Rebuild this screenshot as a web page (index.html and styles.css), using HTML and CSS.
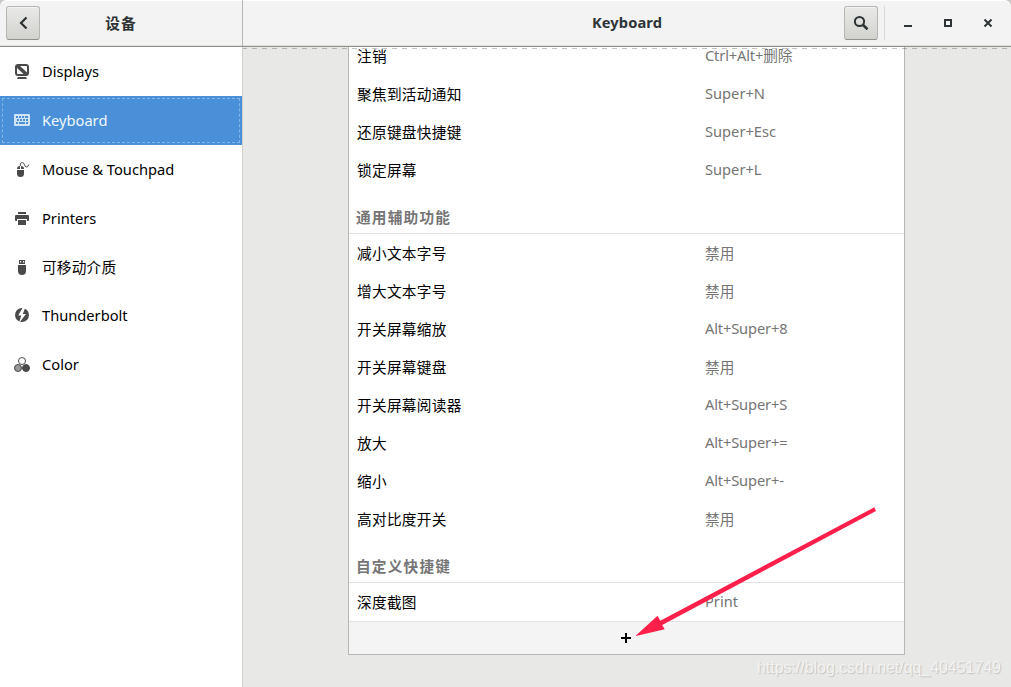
FILE: index.html
```
<!DOCTYPE html>
<html lang="zh-CN">
<head>
<meta charset="utf-8">
<title>Keyboard</title>
<link rel="stylesheet" href="styles.css">
</head>
<body>
<div class="window">
  <header class="titlebar">
    <div class="title-left">
      <button class="btn" aria-label="Back"><svg width="16" height="16" viewBox="0 0 16 16"><path d="M11.500 2.500 6 8l5.500 5.500" fill="none" stroke="#2e3436" stroke-width="2.200"/></svg></button>
      <h1 class="title title-cn">设备</h1>
    </div>
    <div class="title-right">
      <h1 class="title title-main">Keyboard</h1>
      <button class="btn" aria-label="Search"><svg width="16" height="16" viewBox="0 0 16 16" fill="none" stroke="#2e3436"><circle cx="6.500" cy="6.500" r="4.600" stroke-width="2"/><path d="M9.800 9.800 14.500 14.300" stroke-width="2.600"/></svg></button>
      <div class="controls">
        <svg width="16" height="16" viewBox="0 0 16 16"><path d="M4 10h8v2H4z" fill="#2e3436"/></svg>
        <svg width="16" height="16" viewBox="0 0 16 16"><path d="M5 5h6v6H5z" fill="none" stroke="#2e3436" stroke-width="2"/></svg>
        <svg width="16" height="16" viewBox="0 0 16 16"><path d="m4.500 4.500 7 7m0-7-7 7" fill="none" stroke="#2e3436" stroke-width="2"/></svg>
      </div>
    </div>
  </header>
  <div class="body">
    <nav class="sidebar">
      <div class="item"><svg class="icon" viewBox="0 0 16 16"><path d="M4 0h8a3 3 0 0 1 3 3v6a3 3 0 0 1-3 3H4a3 3 0 0 1-3-3V3a3 3 0 0 1 3-3zM6 2l7 6.500V3q0-1-1-1zM3 4v5q0 1 1 1h5.500z" fill-rule="evenodd"/><path d="M4 13h8l1 2H3z"/></svg><span>Displays</span></div>
      <div class="item selected"><svg class="icon" viewBox="0 0 16 16"><path fill-rule="evenodd" d="M1 2h14q1 0 1 1v10q0 1-1 1H1q-1 0-1-1V3q0-1 1-1zm1 2v2h2V4zm3 0v2h2V4zm3 0v2h2V4zm3 0v2h3V4zM3 7v2h2V7zm3 0v2h2V7zm3 0v2h2V7zm3 0v2h2V7zM2 10v2h2v-2zm3 0v2h6v-2zm7 0v2h2v-2z"/></svg><span>Keyboard</span></div>
      <div class="item"><svg class="icon" viewBox="0 0 16 16"><path d="M3 8h7v3.500a3.500 3.500 0 0 1-7 0zM3 7q0-3 3-3v3zM7 4q3 0 3 3H7z"/><path d="M6.300 4C6.300 1 7 .5 8.200.5 11 .5 10 5 12.500 5q1.500 0 2.500-2.500" fill="none" stroke="#4a4a4a"/></svg><span>Mouse &amp; Touchpad</span></div>
      <div class="item"><svg class="icon" viewBox="0 0 16 16"><path d="M4 1h8v2H4zM2 4h12q1 0 1 1v4q0 1-1 1h-1V8H3v2H2q-1 0-1-1V5q0-1 1-1zM4 9h8v5H4z"/></svg><span>Printers</span></div>
      <div class="item short"><svg class="icon" viewBox="0 0 16 16"><path fill-rule="evenodd" d="M5 0h6v4H5zm1 1v1.500h1.200V1zm3 0v1.500h1.200V1zM4 5h8v6a4 4 0 0 1-8 0z"/></svg><span class="cn">可移动介质</span></div>
      <div class="item bolt"><svg class="icon" viewBox="0 0 16 16"><circle cx="8" cy="8" r="7"/><path d="M9 0 4.200 8.500h3L5 16l7-9H8.800L11.500 0z" fill="#fff"/></svg><span>Thunderbolt</span></div>
      <div class="item"><svg class="icon" viewBox="0 0 16 16" stroke="#4a4a4a"><circle cx="8" cy="4" r="3.500" fill="#fff"/><circle cx="4" cy="11" r="3.500" fill="#999"/><circle cx="12" cy="11" r="3.500"/></svg><span>Color</span></div>
    </nav>
    <main class="content">
      <div class="panel">
        <div class="row first"><span class="name">注销</span><span class="key">Ctrl+Alt+删除</span></div>
        <div class="row"><span class="name">聚焦到活动通知</span><span class="key">Super+N</span></div>
        <div class="row"><span class="name">还原键盘快捷键</span><span class="key">Super+Esc</span></div>
        <div class="row"><span class="name">锁定屏幕</span><span class="key">Super+L</span></div>
        <h2 class="section">通用辅助功能</h2>
        <div class="row"><span class="name">减小文本字号</span><span class="key">禁用</span></div>
        <div class="row"><span class="name">增大文本字号</span><span class="key">禁用</span></div>
        <div class="row"><span class="name">开关屏幕缩放</span><span class="key combo">Alt+Super+8</span></div>
        <div class="row"><span class="name">开关屏幕键盘</span><span class="key">禁用</span></div>
        <div class="row"><span class="name">开关屏幕阅读器</span><span class="key combo">Alt+Super+S</span></div>
        <div class="row"><span class="name">放大</span><span class="key combo">Alt+Super+=</span></div>
        <div class="row"><span class="name">缩小</span><span class="key combo">Alt+Super+-</span></div>
        <div class="row"><span class="name">高对比度开关</span><span class="key">禁用</span></div>
        <h2 class="section">自定义快捷键</h2>
        <div class="row"><span class="name">深度截图</span><span class="key">Print</span></div>
        <div class="add"><svg width="10" height="10" viewBox="0 0 10 10"><path d="M4 0h2v4h4v2H6v4H4V6H0V4h4z"/></svg></div>
      </div>
    </main>
  </div>
  <svg class="arrow" width="240" height="130" viewBox="636 507 240 130"><path d="M874.300 507.300 876 511 662.200 625 664.700 629.300 635.500 636 657.500 615.700 660.300 620.700z" fill="#ff1f4b"/></svg>
  <div class="watermark">https://blog.csdn.net/qq_40451749</div>
</div>
</body>
</html>
```
FILE: styles.css
```
* { box-sizing: border-box; }
body {
  margin: 0;
  font-family: "Noto Sans", "Noto Sans CJK SC", sans-serif;
  font-size: 14.670px;
  color: #000;
}
.window {
  position: relative;
  width: 1011px;
  height: 687px;
  overflow: hidden;
  display: flex;
  flex-direction: column;
  background: #c9c9c7;
}
.titlebar {
  flex: none;
  height: 47px;
  display: flex;
  background: #f3f3f3;
  border-bottom: 1px solid #8f908b;
  box-shadow: inset 0 1px #fff, inset 0 -1px #dfdfdc;
  border-radius: 7px 7px 0 0;
}
.title-left {
  width: 243px;
  display: flex;
  align-items: center;
  padding-left: 6px;
  border-right: 1px solid #b6b6b3;
}
.title-right {
  flex: 1;
  display: flex;
  align-items: center;
}
.title {
  margin: 0;
  flex: 1;
  text-align: center;
  font-size: 14.670px;
  line-height: 20px;
  font-weight: 700;
  color: #2e3436;
}
.title-cn { padding-right: 40px; letter-spacing: 1px; }
.title-main { padding: 0 0 2px 167px; letter-spacing: .1px; }
.btn {
  flex: none;
  width: 34px;
  height: 34px;
  padding: 0;
  display: flex;
  align-items: center;
  justify-content: center;
  border: 1px solid #b6b6b3;
  border-bottom-color: #91918c;
  border-radius: 3px;
  background: linear-gradient(#e9e9e7, #d2d2cf);
  box-shadow: inset 0 1px #f4f4f3;
}
.controls {
  flex: none;
  width: 127px;
  height: 34px;
  margin-left: 6px;
  padding-left: 15px;
  display: flex;
  align-items: center;
  gap: 24px;
  border-left: 1px solid #d9d9d7;
}
.body { flex: 1; display: flex; min-height: 0; }
.sidebar {
  width: 243px;
  background: #fff;
  border-right: 1px solid #cfcfcc;
}
.item {
  height: 49px;
  display: flex;
  align-items: center;
  gap: 12px;
  padding-left: 14px;
}
.item span { padding-bottom: 2px; }
.item .cn { letter-spacing: .2px; }
.item.short { height: 48px; }
.item.short .icon { margin-top: 1px; }
.item.bolt .icon { margin-bottom: 2px; }
.item.selected {
  color: #fff;
  background: #4a90d9;
  outline: 1px dashed #86b5e6;
  outline-offset: -3px;
}
.selected span { opacity: .93; }
.icon { width: 16px; height: 16px; fill: #4a4a4a; }
.selected .icon { fill: #d0e2f5; margin-bottom: 2px; }
.content {
  flex: 1;
  position: relative;
  background: #e8e8e6;
  overflow: hidden;
  padding-left: 105px;
}
.content::before {
  content: "";
  position: absolute;
  left: 0;
  top: 1px;
  width: 100%;
  height: 1px;
  background: repeating-linear-gradient(90deg, rgba(0,0,0,.24) 0 4px, transparent 4px 9px, rgba(0,0,0,.24) 9px 10px);
}
.panel {
  width: 557px;
  height: 618px;
  margin-top: -10px;
  background: #fff;
  border: 1px solid #b6b6b3;
  border-top: 0;
}
.row {
  height: 38px;
  display: flex;
  align-items: center;
  padding: 0 0 2px 8px;
}
.name { width: 348px; letter-spacing: .3px; }
.key { color: #757575; }
.combo { letter-spacing: -.15px; }
.first .key { padding-bottom: 2px; letter-spacing: -.15px; }
.section {
  height: 45px;
  margin: 0;
  padding: 11px 0 0 7px;
  font-size: 14.670px;
  line-height: 34px;
  font-weight: 700;
  letter-spacing: 1.200px;
  color: #757575;
  border-bottom: 1px solid #e2e2e0;
}
.add {
  height: 33px;
  border-top: 1px solid #e2e2e0;
  background: #f4f4f4;
  display: flex;
  justify-content: center;
  align-items: center;
  padding-right: 1px;
}
.arrow { position: absolute; left: 636px; top: 507px; }
.watermark {
  position: absolute;
  left: 757px;
  top: 658px;
  font: 15.900px/20px "Liberation Sans", Arial, sans-serif;
  color: #f3f3f2;
  text-shadow: 1px 1px 1px #c2c2c0;
  white-space: nowrap;
}
```
